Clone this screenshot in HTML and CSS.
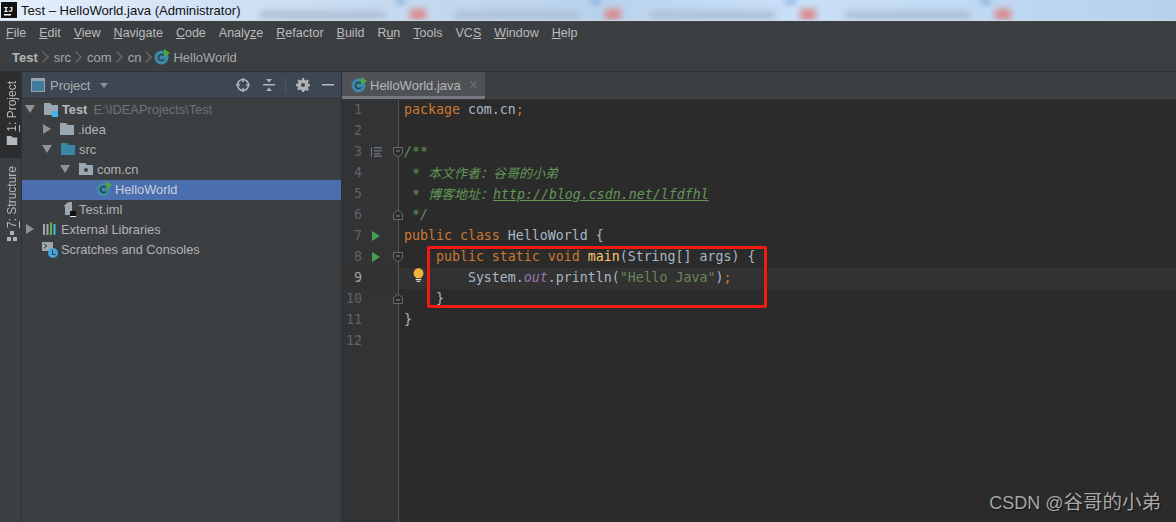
FILE: index.html
```html
<!DOCTYPE html>
<html lang="en">
<head>
<meta charset="utf-8">
<title>Test – HelloWorld.java</title>
<link rel="stylesheet" href="styles.css">
</head>
<body>
<svg class="defs" width="0" height="0" aria-hidden="true">
  <defs>
    <symbol id="folder" viewBox="0 0 16 14"><path d="M1 1h6l2 2h6v10H1z"/></symbol>
    <symbol id="cls" viewBox="0 0 16 16">
      <circle cx="7.5" cy="8.5" r="7" fill="#3d89a8"/>
      <path d="M10 6.6A3.1 3.1 0 1 0 10 10.4" fill="none" stroke="#2b3d48" stroke-width="1.5"/>
      <path d="M10 0l6 4-6 4z" fill="#4fa83d"/>
    </symbol>
    <symbol id="run" viewBox="0 0 10 12"><path d="M1 1l8 5-8 5z" fill="#499c54"/></symbol>
    <symbol id="fold" viewBox="0 0 10 12"><path d="M.5 1.500h9v6L5 11 .5 7.500z" fill="#2b2b2b" stroke="#66696b"/><path d="M3 5h4" stroke="#8a8d8f"/></symbol>
    <symbol id="foldend" viewBox="0 0 10 12"><path d="M.5 10.500h9v-6L5 1 .5 4.500z" fill="#2b2b2b" stroke="#66696b"/><path d="M3 7h4" stroke="#8a8d8f"/></symbol>
  </defs>
</svg>

<div class="app">
  <header class="titlebar">
    <div class="desktop-blur">
      <span class="smear"></span><span class="smear"></span><span class="smear"></span><span class="smear"></span>
    </div>
    <svg class="ij-logo" width="16" height="16" viewBox="0 0 16 16"><rect width="16" height="16" fill="#111"/><rect x="3" y="12" width="7" height="1.500" fill="#fff"/><text x="2.500" y="9.500" class="ij-text">IJ</text></svg>
    <span class="title-text">Test – HelloWorld.java (Administrator)</span>
  </header>

  <nav class="menubar">
    <span><u>F</u>ile</span><span><u>E</u>dit</span><span><u>V</u>iew</span><span><u>N</u>avigate</span><span><u>C</u>ode</span><span>Analy<u>z</u>e</span><span><u>R</u>efactor</span><span><u>B</u>uild</span><span>R<u>u</u>n</span><span><u>T</u>ools</span><span>VC<u>S</u></span><span><u>W</u>indow</span><span><u>H</u>elp</span>
  </nav>

  <div class="crumbs">
    <b>Test</b><i class="chev"></i><span>src</span><i class="chev"></i><span>com</span><i class="chev"></i><span>cn</span><i class="chev last"></i>
    <svg class="ic16"><use href="#cls"/></svg><span class="crumb-last">HelloWorld</span>
  </div>

  <main class="workspace">
    <aside class="strip">
      <div class="strip-tab active">
        <span class="vtext"><u>1</u>: Project</span>
        <svg class="strip-folder" width="12" height="11" viewBox="0 0 16 14" fill="#b4b8ba"><use href="#folder"/></svg>
      </div>
      <div class="strip-tab">
        <span class="vtext"><u>7</u>: Structure</span>
        <svg width="10" height="10" viewBox="0 0 10 10" fill="#afb1b3"><rect x="3" y="0" width="4" height="4"/><rect x="0" y="6" width="4" height="4"/><rect x="6" y="6" width="4" height="4"/></svg>
      </div>
    </aside>

    <section class="project">
      <div class="panel-head">
        <svg class="win-ic" width="14" height="14" viewBox="0 0 14 14"><rect x=".5" y=".5" width="13" height="13" fill="#3f7c9e" stroke="#9aa4ab"/><rect x="1" y="1" width="12" height="2" fill="#9aa4ab"/></svg>
        <span class="panel-title">Project</span><i class="tri-down small"></i>
        <span class="spacer"></span>
        <svg class="tool" width="14" height="14" viewBox="0 0 14 14" fill="none" stroke="#afb1b3" stroke-width="1.600"><circle cx="7" cy="7" r="5.500"/><path d="M7 0v4M7 10v4M0 7h4M10 7h4"/></svg>
        <svg class="tool" width="14" height="14" viewBox="0 0 14 14" fill="#afb1b3"><path d="M1 6h12v1.500H1zM4 1h6L7 4.500zM4 13h6L7 9.500z"/></svg>
        <i class="vsep"></i>
        <svg class="tool gear" width="14" height="14" viewBox="0 0 14 14" fill="#afb1b3"><path d="M6 0h2l.4 1.800 1.500.7 1.600-1 1.400 1.400-1 1.600.7 1.500L14 6v2l-1.400.5-.7 1.500 1 1.600-1.400 1.400-1.600-1-1.500.7L8 14H6l-.4-1.800-1.500-.7-1.600 1-1.400-1.400 1-1.600L1.400 8.500 0 8V6l1.800-.4.700-1.500-1-1.600L2.900 1.500l1.600 1 1.500-.7zM7 5a2 2 0 1 0 0 4 2 2 0 0 0 0-4z" fill-rule="evenodd"/></svg>
        <svg class="tool" width="12" height="14" viewBox="0 0 12 14" fill="#afb1b3"><rect y="6" width="12" height="1.600"/></svg>
      </div>
      <ul class="tree">
        <li class="row d0"><i class="tri-down"></i><span class="ic-wrap"><svg class="ic16 f-gray"><use href="#folder"/></svg><i class="mod-badge"></i></span><b class="root">Test</b><span class="path">E:\IDEAProjects\Test</span></li>
        <li class="row d1"><i class="tri-right"></i><svg class="ic16 f-gray"><use href="#folder"/></svg><span>.idea</span></li>
        <li class="row d1"><i class="tri-down"></i><svg class="ic16 f-blue"><use href="#folder"/></svg><span>src</span></li>
        <li class="row d2"><i class="tri-down"></i><span class="ic-wrap"><svg class="ic16 f-gray"><use href="#folder"/></svg><i class="pkg-dot"></i></span><span>com.cn</span></li>
        <li class="row d3 selected"><svg class="ic16"><use href="#cls"/></svg><span>HelloWorld</span></li>
        <li class="row d4"><span class="ic-wrap"><svg class="ic16" viewBox="0 0 16 16" fill="#9aa7b0"><path d="M5 5l4-4h3v13H5z"/><path d="M3.500 5.500L8 1v4.500z" fill="#9aa7b0"/></svg><i class="iml-badge"></i></span><span>Test.iml</span></li>
        <li class="row d0"><i class="tri-right"></i><svg class="ic16" viewBox="0 0 16 16"><path d="M1 3h2v11H1z" fill="#9aa7b0"/><path d="M4.500 3h2v11h-2z" fill="#9aa7b0"/><path d="M8 1.500h2V14H8z" fill="#62b543"/><path d="M11.500 3h2v11h-2z" fill="#40b6e0"/></svg><span>External Libraries</span></li>
        <li class="row d0b"><span class="ic-wrap"><svg class="ic16" viewBox="0 0 16 16"><rect x="0" y="1" width="11" height="9" fill="#9aa7b0"/><path d="M2 3l3 2-3 2" fill="none" stroke="#3c3f41"/></svg><i class="clock"></i></span><span>Scratches and Consoles</span></li>
      </ul>
    </section>

    <section class="editor">
      <div class="tabs">
        <div class="tab"><svg class="ic16"><use href="#cls"/></svg><span>HelloWorld.java</span><span class="tab-x">×</span></div>
      </div>
      <div class="code-area">
        <div class="gutter">
          <div class="gline"><span class="ln">1</span></div>
          <div class="gline"><span class="ln">2</span></div>
          <div class="gline"><span class="ln">3</span><span class="mark"><svg width="11" height="10" viewBox="0 0 11 10" fill="#6b6e70"><path d="M0 0h1v10H0zM3 0h8v1.500H3zM3 3h8v1.500H3zM3 6h6v1.500H3zM3 8.500h8V10H3z"/></svg></span><svg class="foldic"><use href="#fold"/></svg></div>
          <div class="gline"><span class="ln">4</span></div>
          <div class="gline"><span class="ln">5</span></div>
          <div class="gline"><span class="ln">6</span><span class="mark"></span><svg class="foldic"><use href="#foldend"/></svg></div>
          <div class="gline"><span class="ln">7</span><span class="mark"><svg class="runic"><use href="#run"/></svg></span></div>
          <div class="gline"><span class="ln">8</span><span class="mark"><svg class="runic"><use href="#run"/></svg></span><svg class="foldic"><use href="#fold"/></svg></div>
          <div class="gline current"><span class="ln">9</span></div>
          <div class="gline"><span class="ln">10</span><span class="mark"></span><svg class="foldic"><use href="#foldend"/></svg></div>
          <div class="gline"><span class="ln">11</span></div>
          <div class="gline"><span class="ln">12</span></div>
        </div>
        <div class="code">
<div class="line"><span class="kw">package</span> com.cn<span class="kw">;</span></div>
<div class="line"></div>
<div class="line cm">/**</div>
<div class="line cm"> * <span class="cjk">本文作者：谷哥的小弟</span></div>
<div class="line cm"> * <span class="cjk">博客地址：</span><u>http://blog.csdn.net/lfdfhl</u></div>
<div class="line cm"> */</div>
<div class="line"><span class="kw">public class</span> HelloWorld {</div>
<div class="line">    <span class="kw">public static void</span> <span class="fn">main</span>(String[] args) {</div>
<div class="line current">        System.<em class="field">out</em>.println(<span class="str">"Hello Java"</span>)<span class="kw">;</span></div>
<div class="line">    }</div>
<div class="line">}</div>
<div class="line"></div>
          <svg class="bulb" width="11" height="15" viewBox="0 0 12 16"><path d="M6 0a5.500 5.500 0 0 1 3 10v1H3v-1A5.500 5.500 0 0 1 6 0z" fill="#f2b33c"/><path d="M3 12.500h6M4 14.500h4" stroke="#d8d8d8" stroke-width="1.200"/></svg>
          <div class="redbox"></div>
        </div>
        <div class="watermark">CSDN @<span class="wm-cjk">谷哥的小弟</span></div>
      </div>
    </section>
  </main>
</div>
</body>
</html>
```

FILE: styles.css
```css
* { box-sizing: border-box; }
html, body { margin: 0; height: 100%; overflow: hidden; }
body { background: #3c3f41; font-family: "Liberation Sans", sans-serif; }
.defs { position: absolute; }
.app { display: flex; flex-direction: column; width: 1176px; height: 522px; overflow: hidden; }

/* title bar */
.titlebar { position: relative; flex: 0 0 21px; display: flex; align-items: center; gap: 4px; padding-left: 1px; overflow: hidden;
  background: linear-gradient(90deg, #e3eefb 0, #cfe0f3 240px, #b9d2ec 600px, #c9e0f8 800px, #b7d1eb 1176px);
  border-bottom: 1px solid #cfdbe6; color: #111; font-size: 13px; }
.desktop-blur { position: absolute; inset: 0 0 1px 0; display: flex; padding-left: 250px; filter: blur(3px); }
.smear { flex: 0 0 195px; height: 20px;
  background:
    linear-gradient(#d98a8e, #d98a8e) 160px 9px / 16px 11px no-repeat,
    linear-gradient(#aebfd4, #aebfd4) 10px 11px / 125px 8px no-repeat,
    linear-gradient(#4f87c9, #4f87c9) 146px 0 / 9px 3px no-repeat; }
.ij-logo { position: relative; flex: none; }
.ij-text { font: 700 8px "Liberation Mono", monospace; fill: #fff; }
.title-text { position: relative; font-size: 13.100px; }

/* menu */
.menubar { flex: 0 0 23px; display: flex; align-items: center; gap: 13px; padding-left: 6px; background: #3c3f41; color: #bbbbbb; font-size: 12.500px; }

/* breadcrumbs */
.crumbs { flex: 0 0 28px; display: flex; align-items: center; padding: 0 0 1px 12px; color: #a6a8aa; font-size: 13px; border-bottom: 1px solid #2f3234; }
.crumbs b { color: #b4b6b8; }
.chev { width: 6px; height: 6px; margin: 0 8px 0 2px; border-top: 1px solid #63676a; border-right: 1px solid #63676a; transform: rotate(45deg) scale(1.400); }
.chev.last { margin-right: 5px; }
.crumb-last { margin-left: 3px; }
.ic16 { width: 16px; height: 16px; flex: none; }

/* workspace */
.workspace { flex: 1; display: flex; min-height: 0; }
.strip { flex: 0 0 22px; display: flex; flex-direction: column; background: #3c3f41; border-right: 1px solid #323232; }
.strip-tab { display: flex; flex-direction: column; align-items: center; justify-content: flex-end; gap: 3px; color: #b8babc; font-size: 12px; padding: 8px 0 0 3px; }
.strip-tab.active { background: #2b2d2e; height: 86px; padding: 0 0 12px 3px; }
.vtext { writing-mode: vertical-rl; transform: rotate(180deg); white-space: nowrap; line-height: 14px; }

/* project */
.project { flex: 0 0 320px; display: flex; flex-direction: column; background: #3c3f41; border-right: 1px solid #323232; }
.panel-head { flex: 0 0 27px; display: flex; align-items: center; padding: 0 7px 0 9px; background: #3d4753; border-bottom: 1px solid #323232; color: #a9adb0; font-size: 13px; }
.panel-title { margin-left: 5px; }
.spacer { flex: 1; }
.tool { margin-left: 12px; flex: none; }
.gear { margin-left: 10px; }
.win-ic { flex: none; }
.vsep { width: 1px; height: 16px; margin-left: 9px; background: #4d5862; }
.tri-down { flex: none; width: 0; height: 0; border-left: 5px solid transparent; border-right: 5px solid transparent; border-top: 8px solid #8f9396; }
.tri-down.small { margin-left: 10px; border-left-width: 4px; border-right-width: 4px; border-top-width: 5px; }
.tri-right { flex: none; width: 0; height: 0; border-top: 5px solid transparent; border-bottom: 5px solid transparent; border-left: 8px solid #8f9396; margin-left: 1px; margin-right: 1px; }
.tree { list-style: none; margin: 0; padding: 1px 0 0; font-size: 12.800px; color: #b1b3b5; }
.row { height: 20px; display: flex; align-items: center; gap: 3px; padding-bottom: 2px; white-space: nowrap; }
.row > i { margin-right: 6px; }
.row > .ic16, .row > .ic-wrap { margin-left: -1px; }
.d0 { padding-left: 3px; }
.d0b { padding-left: 21px; }
.d1 { padding-left: 20px; }
.d2 { padding-left: 38px; }
.d3 { padding-left: 75px; }
.d4 { padding-left: 39px; }
.selected { background: #4b6eaf; color: #c8d0dc; }
.root { color: #b9bbbd; }
.path { color: #6f7274; margin-left: 3px; }
.f-gray { fill: #9aa7b0; }
.f-blue { fill: #3a86a5; }
.ic-wrap { position: relative; width: 16px; height: 16px; flex: none; display: block; }
.mod-badge { position: absolute; right: 1px; bottom: 0; width: 6px; height: 6px; background: #40b6e0; }
.pkg-dot { position: absolute; left: 6px; top: 7px; width: 4px; height: 4px; border-radius: 50%; background: #3c3f41; }
.iml-badge { position: absolute; right: 0; bottom: 0; width: 6px; height: 6px; background: #111; border-bottom: 1px solid #eee; }
.clock { position: absolute; right: 0; bottom: -1px; width: 10px; height: 10px; border-radius: 50%; background: #40a6dc; }
.clock::after { content: ""; position: absolute; left: 4px; top: 2px; width: 3px; height: 4px; border-left: 1px solid #3c3f41; border-bottom: 1px solid #3c3f41; }

/* editor */
.editor { flex: 1; min-width: 0; display: flex; flex-direction: column; background: #2b2b2b; }
.tabs { flex: 0 0 27px; background: #3c3f41; border-bottom: 1px solid #323232; }
.tab { width: 143px; height: 27px; display: flex; align-items: center; gap: 3px; padding: 2px 5px 0 9px; background: #4e5254; border-bottom: 3px solid #747a80; color: #b5b7b9; font-size: 13px; }
.tab-x { margin-left: 5px; font-size: 16px; color: #6d7073; line-height: 1; }
.code-area { position: relative; flex: 1; display: flex; min-height: 0; font-family: "DejaVu Sans Mono", monospace; font-size: 13.280px; }
.gutter { flex: 0 0 57px; background: #313335; border-right: 1px solid #555; color: #606366; }
.gline { height: 21px; display: flex; align-items: center; position: relative; padding-bottom: 2px; }
.gline.current { color: #a4a3a3; background: #323232; }
.ln { width: 20px; text-align: right; flex: none; }
.mark { width: 16px; margin-left: 9px; display: flex; align-items: center; flex: none; }
.runic { width: 10px; height: 12px; }
.foldic { width: 10px; height: 12px; flex: none; position: absolute; left: 51px; }
.code { position: relative; flex: 1; color: #a9b7c6; }
.line { height: 21px; line-height: 19px; padding-left: 5px; white-space: pre; }
.line.current { background: #323232; }
.kw { color: #cc7832; }
.fn { color: #ffc66d; }
.str { color: #6a8759; }
.cm { color: #629755; font-style: italic; }
.cm u { text-decoration: underline; }
.cjk { font-family: "Noto Sans CJK SC", sans-serif; font-size: 13px; }
.field { color: #9876aa; }
.bulb { position: absolute; left: 14px; top: 168px; }
.redbox { position: absolute; left: 28px; top: 146px; width: 340px; height: 62px; border: 3px solid #f01c12; border-radius: 2px; }
.watermark { position: absolute; right: 15px; top: 389px; color: #a8a8a8; font-family: "Liberation Sans", "Noto Sans CJK SC", sans-serif; font-size: 18px; line-height: 24px; text-shadow: 1px 1px 1px #111; }
.wm-cjk { font-family: "Noto Sans CJK SC", sans-serif; font-size: 19.500px; }
```
